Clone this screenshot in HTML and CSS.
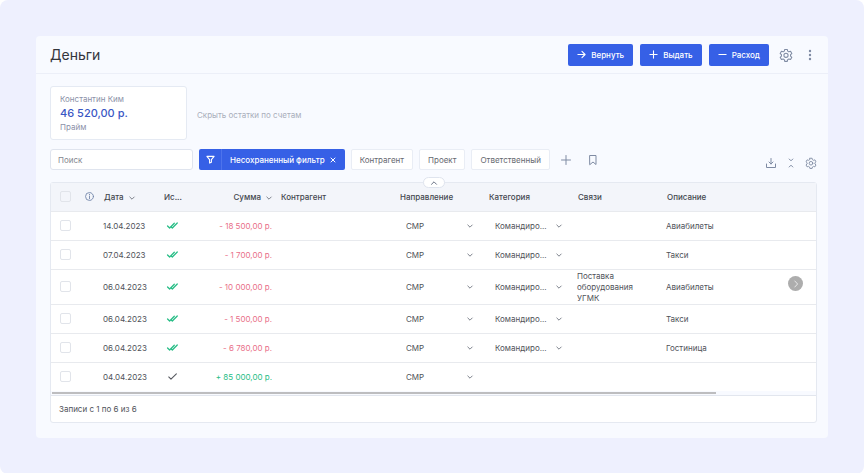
FILE: index.html
```html
<!DOCTYPE html>
<html lang="ru">
<head>
    <meta charset="UTF-8">
    <meta name="viewport" content="width=device-width, initial-scale=1.0">
    <title>Деньги</title>
    <link rel="stylesheet" href="styles.css">
</head>
<body>

<svg class="sprite" aria-hidden="true">
    <symbol id="gear" viewBox="0 0 24 24">
        <path d="M9.800 2.500h4.400l.7 2.900 2 1.200 2.900-.9 2.200 3.800-2.200 2v2.400l2.200 2-2.200 3.800-2.900-.9-2 1.200-.7 2.900H9.800l-.7-2.900-2-1.200-2.900.9L2 15.900l2.200-2v-2.400l-2.200-2 2.200-3.800 2.900.9 2-1.200z"/>
        <circle cx="12" cy="12.500" r="3.600"/>
    </symbol>
    <symbol id="down" viewBox="0 0 8 8">
        <path d="M1.800 3 4 5.200 6.200 3"/>
    </symbol>
    <symbol id="double-check" viewBox="0 0 14 10">
        <path d="M1.500 5.500 3.800 7.800 9 2.500M5.200 6.300 6.800 7.800 12.300 2.200"/>
    </symbol>
    <symbol id="check" viewBox="0 0 14 10">
        <path d="M2.800 5.500 5.300 8 11.300 2"/>
    </symbol>
</svg>

<div class="page">
<main class="panel">
    <header class="header">
        <h1>Деньги</h1>
        <button class="btn" type="button"><svg class="icon" viewBox="0 0 10 10"><path d="M1 5h8M5.500 1.500 9 5 5.500 8.500"/></svg>Вернуть</button>
        <button class="btn" type="button"><svg class="icon" viewBox="0 0 10 10"><path d="M1 5h8M5 1v8"/></svg>Выдать</button>
        <button class="btn" type="button"><svg class="icon" viewBox="0 0 10 10"><path d="M1 5h8"/></svg>Расход</button>
        <button class="icon-btn settings" type="button" aria-label="Настройки"><svg class="icon-lg"><use href="#gear"/></svg></button>
        <button class="icon-btn" type="button" aria-label="Ещё"><svg class="icon-lg dots" viewBox="0 0 14 14"><circle cx="7" cy="3" r="1.200"/><circle cx="7" cy="7" r="1.200"/><circle cx="7" cy="11" r="1.200"/></svg></button>
    </header>

    <div class="content">
        <section class="accounts">
            <div class="account">
                <span>Константин Ким</span>
                <strong>46 520,00 р.</strong>
                <span>Прайм</span>
            </div>
            <button class="toggle-link" type="button">Скрыть остатки по счетам</button>
        </section>

        <div class="filters">
            <input class="search" type="text" placeholder="Поиск" aria-label="Поиск">
            <div class="filter">
                <button class="filter-icon" type="button" aria-label="Фильтр"><svg class="icon" viewBox="0 0 10 10"><path d="M1 1.500h8L6 5.200v2.800L4 9V5.200z"/></svg></button>
                <button class="filter-name" type="button">Несохраненный фильтр<svg class="close" viewBox="0 0 6 6"><path d="M1 1l4 4M5 1 1 5"/></svg></button>
            </div>
            <button class="chip" type="button">Контрагент</button>
            <button class="chip" type="button">Проект</button>
            <button class="chip" type="button">Ответственный</button>
            <button class="icon-btn add" type="button" aria-label="Добавить"><svg class="icon-md" viewBox="0 0 12 12"><path d="M1.500 6h9M6 1.500v9"/></svg></button>
            <button class="icon-btn bookmark" type="button" aria-label="Сохранить"><svg class="icon-md" viewBox="0 0 12 12"><path d="M3 1.500h6v9L6 8l-3 2.500z"/></svg></button>
            <div class="tools">
                <button class="icon-btn" type="button" aria-label="Скачать"><svg class="icon-md" viewBox="0 0 12 12"><path d="M1.500 7v3.500h9V7M6 1.500v5.500M4 5l2 2 2-2"/></svg></button>
                <button class="icon-btn" type="button" aria-label="Свернуть"><svg class="icon-md" viewBox="0 0 12 12"><path d="M4.200 2l1.800 1.800L7.800 2M4.200 10l1.800-1.800L7.800 10"/></svg></button>
                <button class="icon-btn" type="button" aria-label="Настройки таблицы"><svg class="icon-md"><use href="#gear"/></svg></button>
            </div>
        </div>

        <section class="grid">
            <button class="collapse" type="button" aria-label="Скрыть фильтры"><svg viewBox="0 0 8 8"><path d="M1.500 5.300 4 2.800 6.500 5.300"/></svg></button>
            <table>
                <colgroup>
                    <col class="c-check"><col class="c-info"><col class="c-date"><col class="c-done"><col class="c-sum"><col class="c-party"><col class="c-select"><col class="c-select"><col class="c-select"><col>
                </colgroup>
                <thead>
                    <tr>
                        <th><input type="checkbox" aria-label="Выбрать все"></th>
                        <th><svg class="icon info" viewBox="0 0 10 10"><circle cx="5" cy="5" r="4.400"/><path d="M5 4.500v3M5 2.500v.5"/></svg></th>
                        <th>Дата<svg class="arrow"><use href="#down"/></svg></th>
                        <th>Ис...</th>
                        <th class="sum">Сумма<svg class="arrow"><use href="#down"/></svg></th>
                        <th>Контрагент</th>
                        <th>Направление</th>
                        <th>Категория</th>
                        <th>Связи</th>
                        <th>Описание</th>
                    </tr>
                </thead>
                <tbody>
                    <tr>
                        <td><input type="checkbox" aria-label="Выбрать"></td><td></td>
                        <td>14.04.2023</td>
                        <td><svg class="mark"><use href="#double-check"/></svg></td>
                        <td class="sum minus">- 18 500,00 р.</td><td></td>
                        <td><label class="pick"><select aria-label="Направление"><option>СМР</option></select><svg class="arrow"><use href="#down"/></svg></label></td>
                        <td><label class="pick"><select aria-label="Категория"><option>Командиро...</option></select><svg class="arrow"><use href="#down"/></svg></label></td>
                        <td class="links"></td><td>Авиабилеты</td>
                    </tr>
                    <tr>
                        <td><input type="checkbox" aria-label="Выбрать"></td><td></td>
                        <td>07.04.2023</td>
                        <td><svg class="mark"><use href="#double-check"/></svg></td>
                        <td class="sum minus">- 1 700,00 р.</td><td></td>
                        <td><label class="pick"><select aria-label="Направление"><option>СМР</option></select><svg class="arrow"><use href="#down"/></svg></label></td>
                        <td><label class="pick"><select aria-label="Категория"><option>Командиро...</option></select><svg class="arrow"><use href="#down"/></svg></label></td>
                        <td class="links"></td><td>Такси</td>
                    </tr>
                    <tr>
                        <td><input type="checkbox" aria-label="Выбрать"></td><td></td>
                        <td>06.04.2023</td>
                        <td><svg class="mark"><use href="#double-check"/></svg></td>
                        <td class="sum minus">- 10 000,00 р.</td><td></td>
                        <td><label class="pick"><select aria-label="Направление"><option>СМР</option></select><svg class="arrow"><use href="#down"/></svg></label></td>
                        <td><label class="pick"><select aria-label="Категория"><option>Командиро...</option></select><svg class="arrow"><use href="#down"/></svg></label></td>
                        <td class="links">Поставка оборудования УГМК</td><td>Авиабилеты</td>
                    </tr>
                    <tr>
                        <td><input type="checkbox" aria-label="Выбрать"></td><td></td>
                        <td>06.04.2023</td>
                        <td><svg class="mark"><use href="#double-check"/></svg></td>
                        <td class="sum minus">- 1 500,00 р.</td><td></td>
                        <td><label class="pick"><select aria-label="Направление"><option>СМР</option></select><svg class="arrow"><use href="#down"/></svg></label></td>
                        <td><label class="pick"><select aria-label="Категория"><option>Командиро...</option></select><svg class="arrow"><use href="#down"/></svg></label></td>
                        <td class="links"></td><td>Такси</td>
                    </tr>
                    <tr>
                        <td><input type="checkbox" aria-label="Выбрать"></td><td></td>
                        <td>06.04.2023</td>
                        <td><svg class="mark"><use href="#double-check"/></svg></td>
                        <td class="sum minus">- 6 780,00 р.</td><td></td>
                        <td><label class="pick"><select aria-label="Направление"><option>СМР</option></select><svg class="arrow"><use href="#down"/></svg></label></td>
                        <td><label class="pick"><select aria-label="Категория"><option>Командиро...</option></select><svg class="arrow"><use href="#down"/></svg></label></td>
                        <td class="links"></td><td>Гостиница</td>
                    </tr>
                    <tr>
                        <td><input type="checkbox" aria-label="Выбрать"></td><td></td>
                        <td>04.04.2023</td>
                        <td><svg class="mark single"><use href="#check"/></svg></td>
                        <td class="sum plus">+ 85 000,00 р.</td><td></td>
                        <td><label class="pick"><select aria-label="Направление"><option>СМР</option></select><svg class="arrow"><use href="#down"/></svg></label></td>
                        <td></td><td class="links"></td><td></td>
                    </tr>
                </tbody>
            </table>
            <button class="next" type="button" aria-label="Вправо"><svg viewBox="0 0 8 8"><path d="M2.800 1 5.600 4 2.800 7"/></svg></button>
            <div class="scroll"><div class="thumb"></div></div>
            <footer>Записи с 1 по 6 из 6</footer>
        </section>
    </div>
</main>
</div>

</body>
</html>
```
FILE: styles.css
```css
* { box-sizing: border-box; }
body { margin: 0; background: #fff; font: 8px/12px Inter, "Noto Sans", sans-serif; color: #4f5259; }
button, input, select { font: inherit; color: inherit; margin: 0; }
button { border: none; background: none; padding: 0; cursor: pointer; }
svg { display: block; flex: none; fill: none; stroke: currentColor; stroke-linecap: round; stroke-linejoin: round; }
.sprite { position: absolute; width: 0; height: 0; }

.page { min-height: 100vh; padding: 36px; background: #eef0fe; border-radius: 8px; }
.panel { background: #f8faff; border-radius: 4px; }

.header { display: flex; align-items: center; gap: 7px; height: 38px; padding: 0 11px 0 14px; border-bottom: 1px solid #eceff8; }
h1 { flex: 1; margin: 0; font-size: 14px; line-height: 20px; font-weight: 400; color: #33353c; }
.btn { display: flex; align-items: center; gap: 5px; height: 22px; padding: 0 9px; border-radius: 2px; background: #3660e6; color: #fff; font-weight: 500; }
.icon { width: 9px; height: 9px; stroke-width: 1.2; }
.icon-md { width: 12px; height: 12px; }
.icon-lg { width: 14px; height: 14px; }
.icon-btn { display: flex; color: #7f8ba3; }
.settings { margin: 0 3px; }
.settings svg, .tools use { stroke-width: 1.8; }
.dots { fill: currentColor; stroke: none; }

.content { padding: 12px 11px 15px 14px; }
.accounts { display: flex; align-items: center; gap: 10px; }
.account { display: flex; flex-direction: column; justify-content: center; gap: 1px; width: 137px; height: 54px; padding: 0 9px; background: #fff; border: 1px solid #e5eaf3; border-radius: 3px; color: #8b91a8; }
.account strong { font-size: 11px; line-height: 14px; font-weight: 500; color: #3a57c4; }
.toggle-link { padding-top: 4px; color: #a9aebb; }

.filters { display: flex; align-items: center; gap: 6px; margin-top: 9px; height: 21px; }
.search { width: 143px; height: 21px; padding: 0 7px; border: 1px solid #dfe4ee; border-radius: 3px; background: #fff; }
.search::placeholder { color: #85888f; opacity: 1; }
.filter { display: flex; height: 21px; border-radius: 2px; background: #3660e6; color: #fff; }
.filter-icon { width: 23px; padding: 0 7px; border-right: 1px solid #4d73ec; }
.filter-name { display: flex; align-items: center; gap: 5px; padding: 0 9px 0 8px; font-weight: 500; }
.close { width: 6px; height: 6px; }
.chip { height: 21px; padding: 0 8px; background: #fff; border: 1px solid #e9edf5; border-radius: 2px; color: #666970; }
.add { margin-left: 4px; }
.bookmark { margin-left: 9px; }
.tools { display: flex; gap: 8px; margin: 6px 0 0 auto; }

.grid { position: relative; margin-top: 12px; background: #fff; border: 1px solid #e5e9f1; border-radius: 3px; }
table { width: 100%; table-layout: fixed; border-collapse: collapse; }
.c-check { width: 30px; }
.c-info { width: 22px; }
.c-date { width: 60px; }
.c-done { width: 43px; }
.c-sum { width: 74px; }
.c-party { width: 119px; }
.c-select { width: 89px; }
th, td { height: 29px; padding: 0; text-align: left; vertical-align: middle; border-bottom: 1px solid #e8eaee; }
th { height: 28px; padding-left: 1px; background: #f3f5fa; font-weight: 500; color: #44474f; white-space: nowrap; }
tbody tr:last-child td { border-bottom: none; }
th:first-child, td:first-child { padding-left: 9px; }
td:nth-child(4) { padding-left: 3px; }
.links { padding: 1px 20px 0 0; line-height: 11px; }
.sum { text-align: right; padding-right: 8px; white-space: nowrap; }
th.sum { padding-right: 7px; }
.minus { color: #e96f89; }
.plus { color: #27bd86; }
input[type="checkbox"] { display: block; appearance: none; width: 11px; height: 11px; border: 1px solid #e1e4ea; border-radius: 2px; }
.info { margin-left: 3px; color: #7588ac; stroke-width: 1; }
.arrow { display: inline-block; width: 8px; height: 8px; vertical-align: middle; color: #7d828c; }
th .arrow { margin-left: 4px; }
.mark { width: 13px; height: 9px; color: #27bd86; stroke-width: 1.4; }
.single { color: #55585f; stroke-width: 1.2; }
.pick { display: flex; align-items: center; width: 75px; padding-left: 7px; }
.pick select { flex: 1; min-width: 0; appearance: none; border: none; background: none; padding: 0; }

.collapse { position: absolute; top: -6px; left: 50%; margin-left: -11px; display: flex; align-items: center; justify-content: center; width: 22px; height: 11px; background: #fff; border: 1px solid #dfe4ee; border-radius: 6px; color: #6a7386; }
.collapse svg { width: 8px; height: 8px; }
.next { position: absolute; top: 93px; right: 13px; display: flex; align-items: center; justify-content: center; width: 15px; height: 15px; border-radius: 50%; background: #adadad; color: #e8e8e8; }
.next svg { width: 8px; height: 8px; }
.scroll { height: 5px; padding: 1px; background: #f8faff; border-bottom: 1px solid #e2e6ee; }
.thumb { width: 87%; height: 2px; background: #bdbdbf; }
footer { padding: 7px 8px; }
```
